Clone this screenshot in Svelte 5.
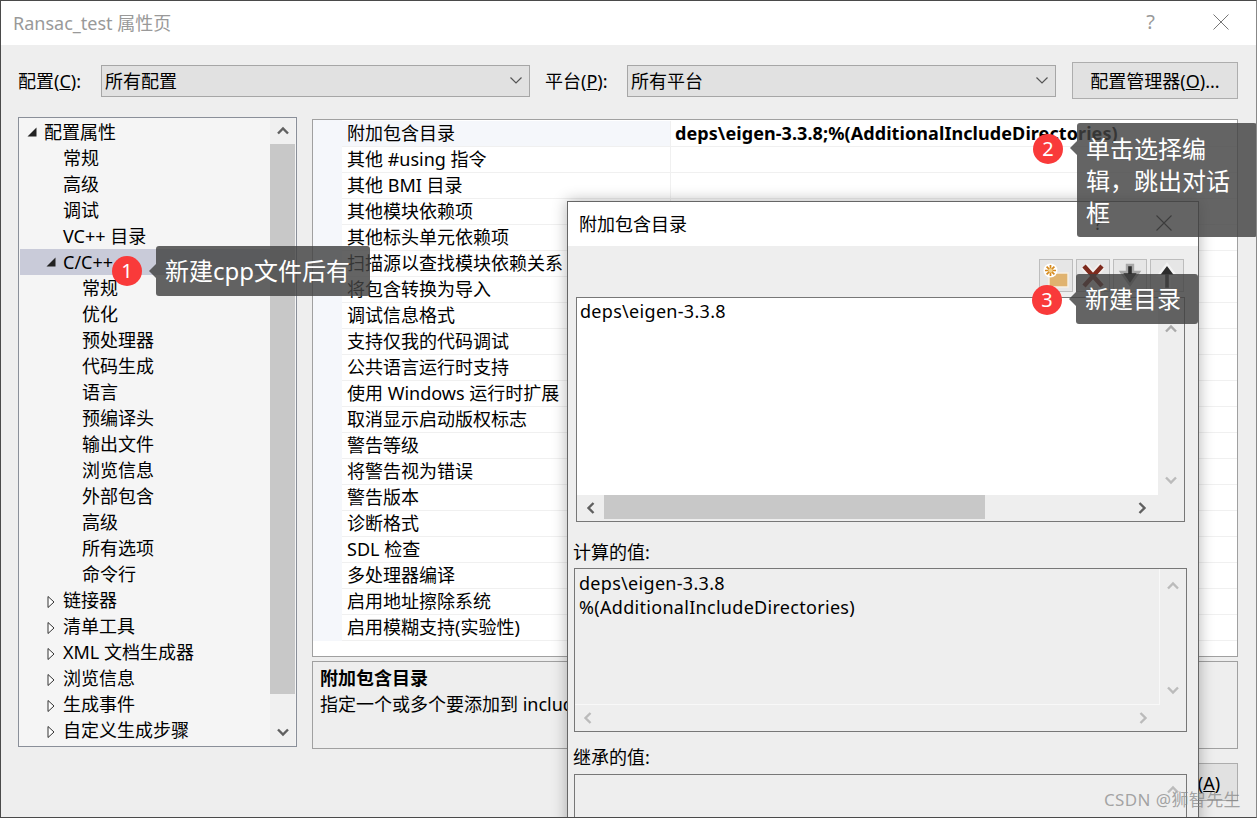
<script lang="ts">
	// 左侧树
	const tree = [
		{ label: '配置属性', level: 0, arrow: 'open' },
		{ label: '常规', level: 1 },
		{ label: '高级', level: 1 },
		{ label: '调试', level: 1 },
		{ label: 'VC++ 目录', level: 1 },
		{ label: 'C/C++', level: 1, arrow: 'open', selected: true },
		{ label: '常规', level: 2 },
		{ label: '优化', level: 2 },
		{ label: '预处理器', level: 2 },
		{ label: '代码生成', level: 2 },
		{ label: '语言', level: 2 },
		{ label: '预编译头', level: 2 },
		{ label: '输出文件', level: 2 },
		{ label: '浏览信息', level: 2 },
		{ label: '外部包含', level: 2 },
		{ label: '高级', level: 2 },
		{ label: '所有选项', level: 2 },
		{ label: '命令行', level: 2 },
		{ label: '链接器', level: 1, arrow: 'closed' },
		{ label: '清单工具', level: 1, arrow: 'closed' },
		{ label: 'XML 文档生成器', level: 1, arrow: 'closed' },
		{ label: '浏览信息', level: 1, arrow: 'closed' },
		{ label: '生成事件', level: 1, arrow: 'closed' },
		{ label: '自定义生成步骤', level: 1, arrow: 'closed' },
	]

	// 右侧属性
	const props = [
		'附加包含目录', '其他 #using 指令', '其他 BMI 目录', '其他模块依赖项', '其他标头单元依赖项',
		'扫描源以查找模块依赖关系', '将包含转换为导入', '调试信息格式', '支持仅我的代码调试', '公共语言运行时支持',
		'使用 Windows 运行时扩展', '取消显示启动版权标志', '警告等级', '将警告视为错误', '警告版本',
		'诊断格式', 'SDL 检查', '多处理器编译', '启用地址擦除系统', '启用模糊支持(实验性)',
	]
</script>

{#snippet chev(angle, color = '#606060')}
	<svg class="chev" width="14" height="14" viewBox="0 0 14 14" style="transform: rotate({angle}deg)">
		<path d="M2 9.5 L7 4.5 L12 9.5" fill="none" stroke={color} stroke-width="2.4" />
	</svg>
{/snippet}

<div class="window">
	<header class="titlebar">
		<span class="title">Ransac_test 属性页</span>
		<span class="help">?</span>
		<svg class="close" width="16" height="16" viewBox="0 0 16 16">
			<path d="M0.5 0.5 L15.5 15.5 M15.5 0.5 L0.5 15.5" stroke="#777" stroke-width="1" />
		</svg>
	</header>

	<div class="config">
		<label class="cfg-label">配置(<u>C</u>):</label>
		<div class="select">
			<span>所有配置</span>
			<svg width="12" height="7" viewBox="0 0 12 7"><path d="M0.5 0.5 L6 6 L11.5 0.5" fill="none" stroke="#555" stroke-width="1.2" /></svg>
		</div>
		<label class="cfg-label plat">平台(<u>P</u>):</label>
		<div class="select">
			<span>所有平台</span>
			<svg width="12" height="7" viewBox="0 0 12 7"><path d="M0.5 0.5 L6 6 L11.5 0.5" fill="none" stroke="#555" stroke-width="1.2" /></svg>
		</div>
		<button class="manager">配置管理器(<u>O</u>)...</button>
	</div>

	<div class="main">
		<aside class="tree">
			<ul>
				{#each tree as item}
					<li class="lv{item.level}" class:selected={item.selected}>
						{#if item.arrow === 'open'}
							<svg class="arrow" width="10" height="10" viewBox="0 0 10 10"><path d="M0.5 9.5 H9.5 V0.5 Z" fill="#222" /></svg>
						{:else if item.arrow === 'closed'}
							<svg class="arrow" width="10" height="14" viewBox="0 0 10 14"><path d="M2 1.5 L8 7 L2 12.5 Z" fill="#fff" stroke="#333" /></svg>
						{/if}
						<span>{item.label}</span>
					</li>
				{/each}
			</ul>
			<div class="tree-scroll">
				<div class="btn">{@render chev(0)}</div>
				<div class="thumb"></div>
				<div class="btn">{@render chev(180)}</div>
			</div>
		</aside>

		<div class="right">
			<div class="grid">
				{#each props as name, i}
					<div class="row" class:first={i === 0}>
						<div class="name">{name}</div>
						<div class="value">
							{#if i === 0}<b>deps\eigen-3.3.8;%(AdditionalIncludeDirectories)</b>{/if}
						</div>
					</div>
				{/each}
			</div>
			<div class="desc">
				<b>附加包含目录</b>
				<p>指定一个或多个要添加到 include 路径中的目录</p>
			</div>
			<div class="footer">
				<button class="apply">应用(<u>A</u>)</button>
			</div>
		</div>
	</div>

	<!-- 子对话框 -->
	<section class="dialog">
		<header class="dlg-title">
			<span>附加包含目录</span>
			<span class="dlg-help">?</span>
			<svg width="16" height="16" viewBox="0 0 16 16"><path d="M0.5 0.5 L15.5 15.5 M15.5 0.5 L0.5 15.5" stroke="#222" stroke-width="1.1" /></svg>
		</header>
		<div class="dlg-body">
			<div class="tools">
				<div class="tool">
					<svg width="32" height="30" viewBox="0 0 32 30">
						<path d="M9 10 H14 L16 12 H28 V26 H9 Z" fill="#e0b36f" stroke="#f6f0e4" stroke-width="1.4" />
						<circle cx="10.5" cy="9.5" r="7" fill="#fff" />
						<path d="M10.5 4 V15 M5 9.5 H16 M6.6 5.6 L14.4 13.4 M14.4 5.6 L6.6 13.4" stroke="#d68a1e" stroke-width="1.7" />
						<circle cx="10.5" cy="9.5" r="2.2" fill="#f1d18c" />
					</svg>
				</div>
				<div class="tool">
					<svg width="32" height="30" viewBox="0 0 32 30">
						<path d="M7 5 L25 25 M25 5 L7 25" stroke="#f4f0ee" stroke-width="8" />
						<path d="M7 5 L25 25 M25 5 L7 25" stroke="#7d2a1d" stroke-width="4.4" />
					</svg>
				</div>
				<div class="tool">
					<svg width="32" height="30" viewBox="0 0 32 30">
						<path d="M13 4 H19 V11 H25 L16 24 L7 11 H13 Z" fill="#2c2c2c" stroke="#a8a8a8" stroke-width="2.4" />
					</svg>
				</div>
				<div class="tool">
					<svg width="32" height="30" viewBox="0 0 32 30">
						<path d="M13 28 H19 V15 H25 L16 3 L7 15 H13 Z" fill="#2c2c2c" stroke="#f4f4f4" stroke-width="2.4" />
					</svg>
				</div>
			</div>

			<div class="box editor">
				<div class="content">deps\eigen-3.3.8</div>
				<div class="vbar">{@render chev(0, '#aaa')}{@render chev(180, '#bbb')}</div>
				<div class="hbar">
					<div class="hbtn">{@render chev(-90)}</div>
					<div class="hthumb"></div>
					<div class="hbtn right-btn">{@render chev(90)}</div>
				</div>
			</div>

			<div class="caption">计算的值:</div>
			<div class="box computed">
				<div class="content">deps\eigen-3.3.8<br />%(AdditionalIncludeDirectories)</div>
				<div class="vbar">{@render chev(0, '#bbb')}{@render chev(180, '#bbb')}</div>
				<div class="hbar dim">{@render chev(-90, '#bbb')}{@render chev(90, '#bbb')}</div>
			</div>

			<div class="caption second">继承的值:</div>
			<div class="box inherited">
				<div class="vbar">{@render chev(0, '#bbb')}</div>
			</div>
		</div>
	</section>

	<!-- 标注 -->
	<div class="badge b1">1</div>
	<div class="tip t1">新建cpp文件后有</div>
	<div class="badge b2">2</div>
	<div class="tip t2">单击选择编辑，跳出对话框</div>
	<div class="badge b3">3</div>
	<div class="tip t3">新建目录</div>

	<div class="mark">CSDN @狮智先生</div>
</div>

<style>
	:global(body) {
		margin: 0;
		background: #eee;
	}
	.window {
		position: relative;
		box-sizing: border-box;
		width: 1257px;
		height: 818px;
		overflow: hidden;
		display: flex;
		flex-direction: column;
		background: #eeeeee;
		border: 1px solid #4a4a4a;
		border-right-color: #888;
		font-family: "Noto Sans", "Noto Sans CJK SC", sans-serif;
		font-size: 18px;
		color: #000;
	}
	.titlebar {
		box-sizing: border-box;
		flex: 0 0 44px;
		display: flex;
		align-items: center;
		background: #fff;
		padding: 0 27px 3px 12px;
	}
	.title {
		color: #999;
		flex: 1;
	}
	.help {
		color: #999;
		font-size: 20px;
		margin-right: 58px;
	}

	/* 配置行 */
	.config {
		display: flex;
		align-items: center;
		height: 38px;
		margin: 16px 18px 0 17px;
	}
	.cfg-label {
		width: 83px;
		margin-top: -1px;
	}
	.cfg-label.plat {
		width: 82px;
		margin-left: 15px;
	}
	.select {
		box-sizing: border-box;
		width: 429px;
		height: 32px;
		margin-top: 2px;
		display: flex;
		align-items: center;
		justify-content: space-between;
		padding: 0 7px 2px 3px;
		background: #e1e1e1;
		border: 1px solid #a6a6a6;
	}
	.manager {
		box-sizing: border-box;
		width: 166px;
		height: 37px;
		margin-left: 16px;
		background: #e1e1e1;
		border: 1px solid #adadad;
		font: inherit;
		color: inherit;
		padding: 0;
	}

	.main {
		display: flex;
		margin: 18px 18px 0 17px;
		gap: 15px;
	}

	/* 树 */
	.tree {
		box-sizing: border-box;
		flex: 0 0 279px;
		height: 630px;
		display: flex;
		border: 1px solid #8a8f99;
		background: #f5f5f5;
	}
	.tree ul {
		flex: 1;
		list-style: none;
		margin: 1px 0 0 1px;
		padding: 0;
	}
	.tree li {
		position: relative;
		height: 26px;
		line-height: 26px;
		white-space: nowrap;
	}
	.tree li.lv0 { padding-left: 24px; }
	.tree li.lv1 { padding-left: 43px; }
	.tree li.lv2 { padding-left: 62px; }
	.tree li.selected { background: #c9cbd9; }
	.arrow {
		position: absolute;
		top: 8px;
		left: 7px;
	}
	.lv1 .arrow { left: 26px; }
	.tree-scroll {
		flex: 0 0 25px;
		margin-right: 1px;
		display: flex;
		flex-direction: column;
		background: #f0f0f0;
	}
	.tree-scroll .btn {
		height: 26px;
		display: flex;
		align-items: center;
		justify-content: center;
	}
	.tree-scroll .thumb {
		height: 550px;
		background: #c8c8c8;
	}
	.tree-scroll .btn:last-child {
		margin-top: auto;
		height: 28px;
	}

	/* 属性表 */
	.right {
		flex: 1;
		display: flex;
		flex-direction: column;
	}
	.grid {
		box-sizing: border-box;
		height: 538px;
		margin-top: 2px;
		padding: 1px 0 0 29px;
		background: linear-gradient(#f5f7fb, #f5f7fb) no-repeat left top / 29px 521px #fff;
		border: 1px solid #a0a0a0;
	}
	.row {
		display: flex;
		height: 26px;
		line-height: 25px;
		box-sizing: border-box;
		border-bottom: 1px solid #f0f0f0;
	}
	.row .name {
		flex: 0 0 329px;
		padding-left: 5px;
		box-sizing: border-box;
		border-right: 1px solid #f0f0f0;
		white-space: nowrap;
	}
	.row.first .name {
		background: #f5f7fb;
	}
	.row .value {
		padding-left: 4px;
		white-space: nowrap;
		letter-spacing: 0.08px;
	}
	.desc {
		box-sizing: border-box;
		height: 88px;
		margin-top: 4px;
		padding: 3px 7px;
		border: 1px solid #a0a0a0;
		line-height: 26px;
	}
	.desc p {
		margin: 0;
	}
	.footer {
		display: flex;
		justify-content: flex-end;
		margin-top: 14px;
	}
	.apply {
		box-sizing: border-box;
		width: 108px;
		height: 38px;
		padding: 0 0 0 14px;
		background: #e1e1e1;
		border: 1px solid #adadad;
		font: inherit;
		color: inherit;
	}

	/* 子对话框 */
	.dialog {
		position: absolute;
		left: 566px;
		top: 200px;
		width: 632px;
		height: 640px;
		box-sizing: border-box;
		display: flex;
		flex-direction: column;
		background: #eee;
		border: 1px solid #666;
		box-shadow: 0 0 14px rgba(0, 0, 0, 0.3);
	}
	.dlg-title {
		box-sizing: border-box;
		flex: 0 0 44px;
		display: flex;
		align-items: center;
		background: #fff;
		padding: 0 26px 2px 11px;
	}
	.dlg-title span:first-child {
		flex: 1;
	}
	.dlg-help {
		margin-right: 54px;
	}
	.dlg-body {
		padding: 13px 11px 0 6px;
	}
	.tools {
		display: flex;
		justify-content: flex-end;
		gap: 3px;
		margin-right: 3px;
		height: 33px;
	}
	.tool {
		box-sizing: border-box;
		width: 34px;
		height: 33px;
		display: flex;
		align-items: center;
		justify-content: center;
		background: #e6e6e6;
		border: 1px solid #bdbdbd;
	}
	.box {
		box-sizing: border-box;
		display: grid;
		grid-template-columns: 1fr 26px;
		border: 1px solid #777;
		line-height: 24px;
	}
	.content {
		padding: 2px 3px;
		overflow: hidden;
		letter-spacing: 0.3px;
	}
	.vbar {
		display: flex;
		flex-direction: column;
		align-items: center;
		justify-content: space-between;
		padding: 24px 0 8px;
	}
	.hbar {
		grid-column: 1 / span 2;
		display: flex;
		align-items: center;
		justify-content: space-between;
		padding: 0 36px 0 6px;
		height: 26px;
	}
	.editor {
		margin: 5px 2px 0 2px;
		height: 225px;
		grid-template-rows: 197px 26px;
	}
	.editor .content {
		background: #fff;
		padding-top: 1px;
	}
	.editor .hbar {
		padding: 0;
		justify-content: flex-start;
		align-items: stretch;
	}
	.hbtn {
		flex: 0 0 27px;
		display: flex;
		align-items: center;
		justify-content: center;
	}
	.hbtn.right-btn {
		margin-left: 144px;
		flex-basis: 26px;
	}
	.hthumb {
		flex: 0 0 381px;
		background: #c8c8c8;
		height: 24px;
	}
	.caption {
		margin: 18px 0 0 -1px;
		height: 28px;
		line-height: 24px;
	}
	.computed {
		height: 164px;
		grid-template-rows: 136px 26px;
	}
	.computed .content {
		border-right: 1px solid #f8f8f8;
		border-bottom: 1px solid #f8f8f8;
		padding: 2px 4px;
	}
	.computed .vbar {
		padding: 10px 0 8px;
	}
	.caption.second {
		margin-top: 13px;
		height: 29px;
	}
	.inherited {
		height: 120px;
	}
	.inherited .vbar {
		grid-column: 2;
		padding-top: 8px;
	}
	.chev {
		display: block;
	}

	/* 标注 */
	.badge {
		position: absolute;
		width: 30px;
		height: 30px;
		border-radius: 50%;
		background: #f93a3a;
		color: #fff;
		font-size: 20px;
		line-height: 29px;
		text-align: center;
	}
	.b1 { left: 111px; top: 255px; }
	.b2 { left: 1032px; top: 133px; }
	.b3 { left: 1031px; top: 284px; }
	.tip {
		position: absolute;
		box-sizing: border-box;
		padding: 9px;
		background: rgba(66, 66, 66, 0.82);
		color: #fff;
		font-size: 24px;
		line-height: 32px;
		border-radius: 3px;
	}
	.tip::before {
		content: '';
		position: absolute;
		left: -7px;
		top: 18px;
		border: 7px solid transparent;
		border-left: 0;
		border-right-color: rgba(66, 66, 66, 0.82);
	}
	.t1 { left: 155px; top: 245px; width: 214px; height: 50px; white-space: nowrap; }
	.t2 { left: 1076px; top: 122px; width: 180px; height: 114px; padding-top: 10px; }
	.t3 { left: 1075px; top: 273px; width: 122px; height: 50px; white-space: nowrap; }
	.mark {
		position: absolute;
		right: 15px;
		bottom: 6px;
		font-size: 17px;
		letter-spacing: 0.4px;
		color: rgba(130, 130, 130, 0.7);
	}
</style>
